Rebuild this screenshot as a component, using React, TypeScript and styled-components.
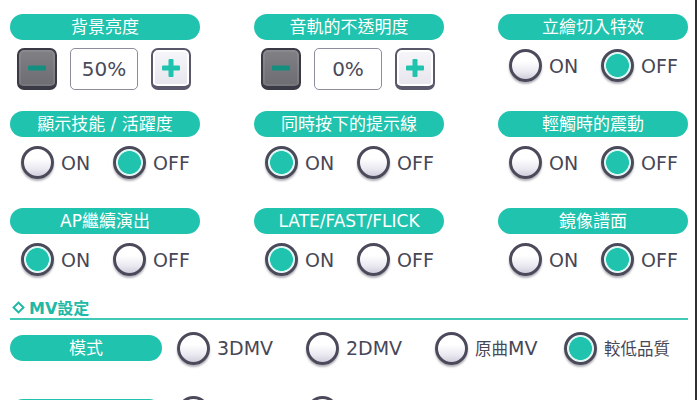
import styled, { createGlobalStyle } from 'styled-components';
import { useState } from 'react';

const GlobalStyle = createGlobalStyle`
  html, body {
    margin: 0;
    padding: 0;
    background: #ffffff;
  }
  body {
    font-family: "DejaVu Sans", "Noto Sans CJK TC", sans-serif;
    color: #4a4a5a;
  }
`;

const TEAL = '#1fc3ae';
const FONT = '"DejaVu Sans", "Noto Sans CJK TC", sans-serif';

type Option = { label: string };

interface Setting {
  kind: 'toggle' | 'step';
  title: string;
  value: number;
}

const topSettings: Setting[] = [
  { kind: 'step', title: '背景亮度', value: 50 },
  { kind: 'step', title: '音軌的不透明度', value: 0 },
  { kind: 'toggle', title: '立繪切入特效', value: 1 },
  { kind: 'toggle', title: '顯示技能 / 活躍度', value: 1 },
  { kind: 'toggle', title: '同時按下的提示線', value: 0 },
  { kind: 'toggle', title: '輕觸時的震動', value: 1 },
  { kind: 'toggle', title: 'AP繼續演出', value: 0 },
  { kind: 'toggle', title: 'LATE/FAST/FLICK', value: 0 },
  { kind: 'toggle', title: '鏡像譜面', value: 1 },
];

const onOff: Option[] = [{ label: 'ON' }, { label: 'OFF' }];

// the second row is cut off by the bottom edge, only its top shows
const mvRows: { title: string; options: Option[]; value: number }[] = [
  {
    title: '模式',
    options: [{ label: '3DMV' }, { label: '2DMV' }, { label: '原曲MV' }, { label: '較低品質' }],
    value: 3,
  },
  {
    title: '',
    options: [{ label: '' }, { label: '' }],
    value: -1,
  },
];

// CJK glyphs in the option labels are drawn smaller than the latin ones
const splitRuns = (text: string) =>
  text.split(/([\u3000-\u9fff]+)/).filter(Boolean).map((part, i) =>
    /[\u3000-\u9fff]/.test(part) ? <CjkRun key={i}>{part}</CjkRun> : part,
  );

const Radio = ({
  options,
  value,
  onChange,
  width,
}: {
  options: Option[];
  value: number;
  onChange: (i: number) => void;
  width: number;
}) => (
  <RadioGroup $width={width} $count={options.length}>
    {options.map((o, i) => (
      <RadioOption key={i} onClick={() => onChange(i)}>
        <Circle $checked={value === i} />
        {o.label && <OptionLabel>{splitRuns(o.label)}</OptionLabel>}
      </RadioOption>
    ))}
  </RadioGroup>
);

const Stepper = ({ value, onChange }: { value: number; onChange: (v: number) => void }) => (
  <StepRow>
    <StepButton $dark onClick={() => onChange(Math.max(0, value - 10))}>
      <Bar />
    </StepButton>
    <ValueBox>{value}%</ValueBox>
    <StepButton $dark={false} onClick={() => onChange(Math.min(100, value + 10))}>
      <Bar $light />
      <Bar $light $vertical />
    </StepButton>
  </StepRow>
);

export default function App() {
  const [values, setValues] = useState(topSettings.map((s) => s.value));
  const [mvValues, setMvValues] = useState(mvRows.map((r) => r.value));

  const setAt = (i: number, v: number) =>
    setValues((prev) => prev.map((p, j) => (j === i ? v : p)));

  return (
    <>
      <GlobalStyle />
      <Screen>
        <Content>
          <SettingsGrid>
            {topSettings.map((s, i) => (
              <Block key={s.title}>
                <Pill>{s.title}</Pill>
                <Controls>
                  {s.kind === 'step' ? (
                    <Stepper value={values[i]} onChange={(v) => setAt(i, v)} />
                  ) : (
                    <Radio
                      options={onOff}
                      value={values[i]}
                      width={92}
                      onChange={(v) => setAt(i, v)}
                    />
                  )}
                </Controls>
              </Block>
            ))}
          </SettingsGrid>

          <SectionHeader>
            <Diamond />
            MV設定
          </SectionHeader>

          <MvList>
            {mvRows.map((r, i) => (
              <MvRow key={i}>
                <Pill $wide>{r.title}</Pill>
                <Radio
                  options={r.options}
                  value={mvValues[i]}
                  width={129}
                  onChange={(v) =>
                    setMvValues((prev) => prev.map((p, j) => (j === i ? v : p)))
                  }
                />
              </MvRow>
            ))}
          </MvList>
        </Content>
        <Edge />
      </Screen>
    </>
  );
}

const Screen = styled.div`
  width: 700px;
  height: 400px;
  overflow: hidden;
  display: grid;
  grid-template-columns: 695px 2px 1fr;
  background: #ffffff;
`;

const Content = styled.div`
  padding: 14px 0 0 10px;
  width: 678px;
`;

const Edge = styled.div`
  background: #2f2f36;
`;

const SettingsGrid = styled.div`
  display: grid;
  grid-template-columns: repeat(3, 190px);
  column-gap: 54px;
  row-gap: 20px;
`;

const Block = styled.div`
  display: flex;
  flex-direction: column;
`;

const Pill = styled.div<{ $wide?: boolean }>`
  width: ${({ $wide }) => ($wide ? '152px' : '100%')};
  flex-shrink: 0;
  height: 26px;
  border-radius: 13px;
  background: ${TEAL};
  color: #ffffff;
  font-family: ${FONT};
  font-size: 17px;
  font-weight: 400;
  line-height: 26px;
  text-align: center;
  white-space: nowrap;
`;

const Controls = styled.div`
  height: 51px;
  display: flex;
  align-items: center;
`;

const RadioGroup = styled.div<{ $width: number; $count: number }>`
  display: grid;
  grid-template-columns: ${({ $width, $count }) => `repeat(${$count}, ${$width}px)`};
  padding-left: 11px;
`;

const RadioOption = styled.label`
  display: flex;
  align-items: center;
  gap: 7px;
  cursor: pointer;
`;

const Circle = styled.span<{ $checked: boolean }>`
  box-sizing: border-box;
  width: 33px;
  height: 33px;
  flex-shrink: 0;
  border-radius: 50%;
  border: 3px solid #4b4a5b;
  background: ${({ $checked }) =>
    $checked
      ? `radial-gradient(circle closest-side, ${TEAL} 82%, #d3f5ef 87%, #f4fffd 100%)`
      : 'linear-gradient(#ffffff 35%, #e9e8f0 75%, #cfcedb)'};
  box-shadow: 0 2px 2px rgba(40, 40, 60, 0.35);
`;

const OptionLabel = styled.span`
  font-family: ${FONT};
  font-size: 19px;
  color: #474757;
  white-space: nowrap;
`;

const CjkRun = styled.span`
  font-size: 16.5px;
`;

const StepRow = styled.div`
  display: flex;
  align-items: center;
  gap: 13px;
  padding: 6px 0 0 7px;
`;

const StepButton = styled.button<{ $dark: boolean }>`
  position: relative;
  box-sizing: border-box;
  width: 40px;
  height: 42px;
  padding: 0;
  border-radius: 7px;
  border: 2.5px solid ${({ $dark }) => ($dark ? '#3a3946' : '#59586a')};
  border-bottom-width: 4px;
  background: ${({ $dark }) =>
    $dark ? 'linear-gradient(#818085, #6d6c72)' : 'linear-gradient(#f7f7fa, #e6e5ec)'};
  box-shadow: inset 0 0 0 2px ${({ $dark }) => ($dark ? 'rgba(255,255,255,0.08)' : '#ffffff')};
  cursor: pointer;
`;

const Bar = styled.span<{ $light?: boolean; $vertical?: boolean }>`
  position: absolute;
  left: 50%;
  top: 50%;
  width: ${({ $vertical }) => ($vertical ? '5px' : '18px')};
  height: ${({ $vertical }) => ($vertical ? '18px' : '5px')};
  transform: translate(-50%, -50%);
  border-radius: 1px;
  background: ${({ $light }) => ($light ? TEAL : '#138f7f')};
`;

const ValueBox = styled.div`
  box-sizing: border-box;
  width: 68px;
  height: 42px;
  border: 1.5px solid #8e8d9d;
  border-radius: 5px;
  background: #ffffff;
  display: flex;
  align-items: center;
  justify-content: center;
  font-family: ${FONT};
  font-size: 20px;
  color: #4a4a5a;
`;

const SectionHeader = styled.div`
  margin-top: 11px;
  display: flex;
  align-items: center;
  gap: 6px;
  height: 22px;
  padding-left: 4px;
  border-bottom: 2px solid #3fc9b6;
  color: #21b9a5;
  font-family: ${FONT};
  font-size: 16px;
  font-weight: 700;
`;

const Diamond = styled.span`
  box-sizing: border-box;
  width: 9px;
  height: 9px;
  border: 2.5px solid #21b9a5;
  transform: rotate(45deg);
`;

const MvList = styled.div`
  margin-top: 11px;
  display: flex;
  flex-direction: column;
  gap: 30px;
`;

const MvRow = styled.div`
  display: flex;
  align-items: center;
  height: 34px;
  gap: 4px;
`;
